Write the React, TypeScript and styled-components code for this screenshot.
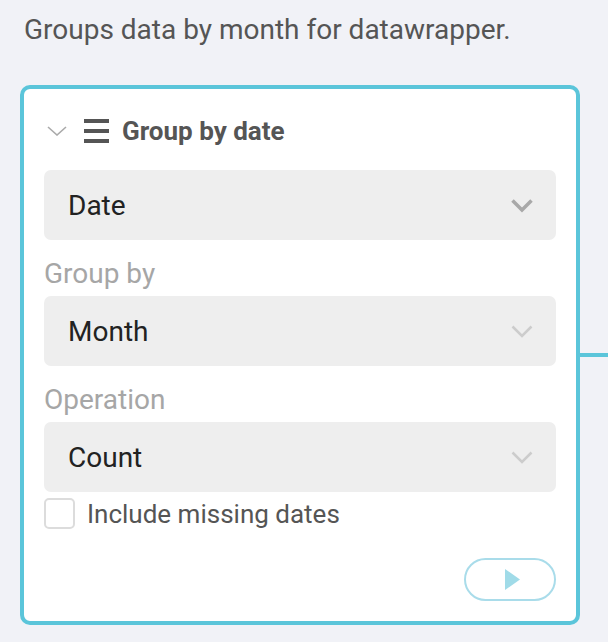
import React, { useState } from 'react';
import styled, { createGlobalStyle } from 'styled-components';

const GlobalStyle = createGlobalStyle`
  html, body {
    margin: 0;
    padding: 0;
    background: #f1f2f7;
    font-family: Roboto, "Liberation Sans", Arial, sans-serif;
  }
`;

const Page = styled.div`
  padding: 12px 0 0 20px;
  width: 588px;
  box-sizing: border-box;
`;

const Description = styled.p`
  margin: 0 0 37px 4px;
  font-size: 28px;
  line-height: 36px;
  color: #555;
`;

const Card = styled.div`
  position: relative;
  width: 560px;
  box-sizing: border-box;
  background: #fff;
  border: 4px solid #5bc5da;
  border-radius: 10px;
  padding: 20px;
  display: flex;
  flex-direction: column;
`;

const Connector = styled.div`
  position: absolute;
  left: 100%;
  top: 50%;
  width: 40px;
  height: 4px;
  margin-left: 4px;
  transform: translateY(-50%);
  background: #5bc5da;
`;

const Header = styled.div`
  display: flex;
  align-items: center;
  height: 44px;
  margin-bottom: 17px;
  padding-left: 3px;
`;

const Title = styled.span`
  font-size: 26px;
  font-weight: 700;
  line-height: 44px;
  color: #555;
`;

const IconSlot = styled.span<{ $gap: number }>`
  display: flex;
  align-items: center;
  margin-right: ${({ $gap }) => $gap}px;
`;

const Select = styled.div`
  display: flex;
  align-items: center;
  justify-content: space-between;
  height: 70px;
  padding: 0 22px 0 24px;
  box-sizing: border-box;
  background: #eeeeee;
  border-radius: 7px;
  font-size: 28px;
  color: #222;
`;

const Label = styled.div`
  margin: 16px 0 4px;
  font-size: 28px;
  line-height: 36px;
  color: #a6a6a6;
`;

const CheckRow = styled.label`
  display: flex;
  align-items: center;
  gap: 12px;
  margin-top: 6px;
  height: 31px;
  font-size: 26px;
  color: #555;
  cursor: pointer;
`;

const Box = styled.span<{ $checked: boolean }>`
  width: 31px;
  height: 31px;
  box-sizing: border-box;
  border: 2px solid #dcdcdc;
  border-radius: 5px;
  background: ${({ $checked }) => ($checked ? '#5bc5da' : '#fff')};
`;

const Footer = styled.div`
  display: flex;
  justify-content: flex-end;
  margin-top: 29px;
`;

const RunButton = styled.button`
  width: 92px;
  height: 43px;
  box-sizing: border-box;
  border: 2px solid #a9dcea;
  border-radius: 22px;
  background: #fff;
  display: flex;
  align-items: center;
  justify-content: center;
  padding: 0 0 0 5px;
  cursor: pointer;
`;

const Chevron = ({ dark }: { dark?: boolean }) => (
  <svg width="24" height="15" viewBox="0 0 24 15">
    <path
      d="M2.5 2.5 L12 12 L21.5 2.5"
      fill="none"
      stroke={dark ? '#a8a8a8' : '#cccccc'}
      strokeWidth={dark ? 3.5 : 2.5}
    />
  </svg>
);

const SelectBox = ({ value, dark }: { value: string; dark?: boolean }) => (
  <Select>
    <span>{value}</span>
    <Chevron dark={dark} />
  </Select>
);

const App = () => {
  const [checked, setChecked] = useState(false);

  return (
    <Page>
      <GlobalStyle />
      <Description>Groups data by month for datawrapper.</Description>
      <Card>
        <Header>
          <IconSlot $gap={17}>
            <svg width="20" height="10" viewBox="0 0 20 10">
              <path d="M1 1 L10 9 L19 1" fill="none" stroke="#aaa" strokeWidth="1.6" />
            </svg>
          </IconSlot>
          <IconSlot $gap={13}>
            <svg width="25" height="24" viewBox="0 0 25 24">
              <rect x="0" y="0" width="25" height="4" fill="#555" />
              <rect x="0" y="10" width="25" height="4" fill="#555" />
              <rect x="0" y="20" width="25" height="4" fill="#555" />
            </svg>
          </IconSlot>
          <Title>Group by date</Title>
        </Header>

        <SelectBox value="Date" dark />

        <Label>Group by</Label>
        <SelectBox value="Month" />

        <Label>Operation</Label>
        <SelectBox value="Count" />

        <CheckRow onClick={() => setChecked(!checked)}>
          <Box $checked={checked} />
          Include missing dates
        </CheckRow>

        <Footer>
          <RunButton>
            <svg width="15" height="21" viewBox="0 0 15 21">
              <path d="M0 0 L15 10.5 L0 21 Z" fill="#a0dbe8" />
            </svg>
          </RunButton>
        </Footer>

        <Connector />
      </Card>
    </Page>
  );
};

export default App;
